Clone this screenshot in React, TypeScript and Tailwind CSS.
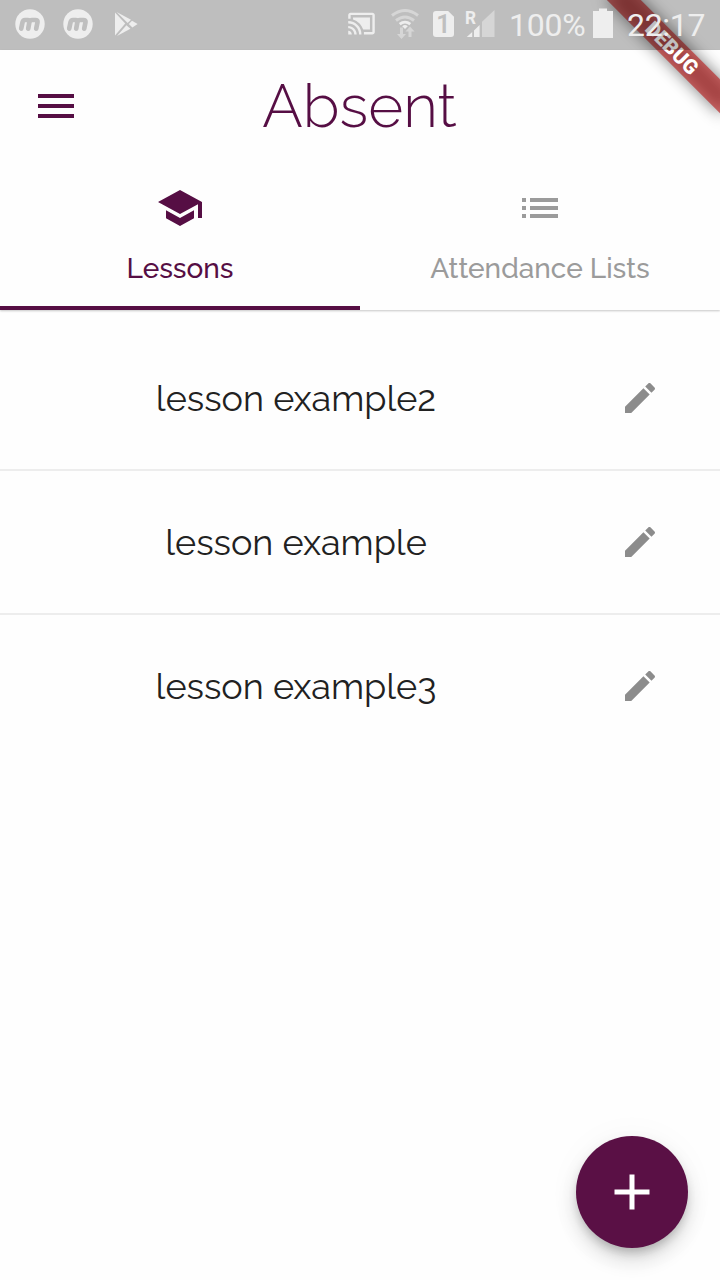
import React from "react";

function Icon({ d, className }: { d: string; className: string }) {
  return (
    <svg viewBox="0 0 24 24" fill="currentColor" className={className}>
      <path d={d} />
    </svg>
  );
}

const MENU = "M3 18h18v-2H3v2zm0-5h18v-2H3v2zm0-7v2h18V6H3z";
const SCHOOL = "M5 13.18v4L12 21l7-3.82v-4L12 17l-7-3.82zM12 3L1 9l11 6 9-4.91V17h2V9L12 3z";
const LIST = "M3 13h2v-2H3v2zm0 4h2v-2H3v2zm0-8h2V7H3v2zm4 4h14v-2H7v2zm0 4h14v-2H7v2zM7 7v2h14V7H7z";
const EDIT =
  "M3 17.25V21h3.75L17.81 9.94l-3.75-3.75L3 17.25zM20.71 7.04c.39-.39.39-1.02 0-1.41l-2.34-2.34c-.39-.39-1.02-.39-1.41 0l-1.83 1.83 3.75 3.75 1.83-1.83z";
const ADD = "M19 13h-6v6h-2v-6H5v-2h6V5h2v6h6v2z";
const CAST =
  "M21 3H3c-1.1 0-2 .9-2 2v3h2V5h18v14h-7v2h7c1.1 0 2-.9 2-2V5c0-1.1-.9-2-2-2zM1 18v3h3c0-1.66-1.34-3-3-3zm0-4v2c2.76 0 5 2.24 5 5h2c0-3.87-3.13-7-7-7zm0-4v2c4.97 0 9 4.03 9 9h2c0-6.08-4.93-11-11-11zM5 7v1.6c4 1.3 7.1 4.4 8.4 8.4H19V7z";

function MBadge() {
  return (
    <svg viewBox="0 0 30 30" className="h-[30px] w-[30px] shrink-0">
      <circle cx="15" cy="15" r="14.7" fill="#eeeeee" />
      <path
        d="M6.2 19.6L7.6 13Q8.1 11 10 11H12.7Q14.8 11 14.4 13L13.2 19.6M14.4 13Q15 11 17 11H20.4Q23 11 22.5 13.3L21.2 19.6"
        fill="none"
        stroke="#bfbfbf"
        strokeWidth="4.7"
        strokeLinecap="round"
        strokeLinejoin="round"
      />
    </svg>
  );
}

function StatusBar() {
  return (
    <div className="relative z-20 flex h-[50px] w-full items-start bg-black/25 font-['Roboto',sans-serif] text-[#eeeeee]">
      <div className="ml-[15px] mt-[9px] flex gap-[18px]">
        <MBadge />
        <MBadge />
      </div>
      <svg viewBox="0 0 24 26" className="ml-[21px] mt-[11px] h-[26px] w-6" fill="#eeeeee">
        <path d="M1 1.5L11.2 12.6 1 24.5z" />
        <path d="M2.6 1L17 8.8 13.7 12z" />
        <path d="M18 9.8L23.6 13 18.4 16.4 14.8 13z" />
        <path d="M12.4 14.2L16.4 17.8 3 25z" />
      </svg>
      <Icon d={CAST} className="ml-[209px] mt-[9px] h-[29px] w-[29px]" />
      <svg viewBox="0 0 28 30" className="ml-[15px] mt-[9px] h-[30px] w-7 shrink-0" fill="none">
        <path d="M1 6.5Q14 -3.5 27 6.5" stroke="#d6d6d6" strokeWidth="3" />
        <path d="M5 11.5Q14 4.5 23 11.5" stroke="#d6d6d6" strokeWidth="3" />
        <path d="M8.7 15.2Q14 11 19.3 15.2" stroke="#eeeeee" strokeWidth="2.8" />
        <path d="M11.2 17.2Q14 14.9 16.8 17.2L14 20z" fill="#eeeeee" />
        <path d="M9 18.5h3v6.5h3l-4.5 5L6 25h3zM17.5 28v-5.5h-3l4.5-5 4.5 5h-3V28z" fill="#d6d6d6" />
      </svg>
      <div className="ml-[14px] mt-[11px] h-[26px] w-[21px] rounded-[3px] bg-[#eeeeee] text-center font-['Roboto',sans-serif] text-[25px] font-semibold leading-[27px] text-[#bfbfbf] [clip-path:polygon(0_0,72%_0,100%_22%,100%_100%,0_100%)]">
        1
      </div>
      <svg viewBox="0 0 30 30" className="ml-[11px] mt-[9px] h-[30px] w-[30px] shrink-0 overflow-visible">
        <path d="M17 12.7L29.5 1v27H17z" fill="#d6d6d6" />
        <path d="M9 21.5L14.6 16v12H9zM7.2 23.1V28H1.8z" fill="#eeeeee" />
        <text x="0" y="15" fill="#eeeeee" fontFamily="Roboto, sans-serif" fontWeight="700" fontSize="18.5" textLength="11" lengthAdjust="spacingAndGlyphs">
          R
        </text>
      </svg>
      <span className="ml-[14px] mt-[6px] w-[78px] whitespace-nowrap text-[32px] leading-[38px] tracking-[-0.2px]">100%</span>
      <svg viewBox="0 0 20 30" className="ml-[6px] mt-[8px] h-[30px] w-5" fill="#eeeeee">
        <path d="M6 0.5h8V3h6v27H0V3h6z" />
      </svg>
      <span className="ml-[14px] mt-[6px] whitespace-nowrap text-[32px] leading-[38px] tracking-[-0.3px]">22:17</span>
    </div>
  );
}

function DebugBanner() {
  return (
    <div className="pointer-events-none absolute right-0 top-0 z-10 h-[170px] w-[170px] overflow-hidden">
      <div className="absolute left-[90px] top-[56px] h-6 w-40 origin-[80px_-56px] rotate-45">
        <div className="absolute inset-0 bg-black/50 blur-[8px]" />
        <div className="absolute inset-0 bg-[#b71c1c]/63 text-center font-['Roboto',sans-serif] text-[20.4px] font-black leading-6 text-white">
          DEBUG
        </div>
      </div>
    </div>
  );
}

function LessonRow({ name, last }: { name: string; last?: boolean }) {
  return (
    <li className={last ? "flex h-36 items-center" : "flex h-36 items-center shadow-[inset_0_-1px_#ededed,0_1px_#ededed]"}>
      <span className="ml-8 w-[528px] text-center text-[36px] leading-[44px] text-[#212121]">{name}</span>
      <Icon d={EDIT} className="ml-[60px] h-10 w-10 text-[#8c8c8c]" />
    </li>
  );
}

export default function App() {
  return (
    <div className="relative flex h-[1280px] w-[720px] flex-col overflow-hidden bg-[#fefefe] font-['Raleway','Lato',sans-serif]">
      <StatusBar />
      <DebugBanner />
      <header className="shadow-[0_1px_2px_rgba(0,0,0,0.22)]">
        <div className="grid h-28 grid-cols-[1fr_auto_1fr] items-center">
          <button className="ml-8 w-12">
            <Icon d={MENU} className="h-12 w-12 text-[#560e44]" />
          </button>
          <h1 className="-ml-px text-[60px] font-light leading-[72px] text-[#560e44]">Absent</h1>
        </div>
        <nav className="flex h-[148px] text-[28px] font-medium leading-8">
          <a className="flex flex-1 flex-col items-center border-b-4 border-[#560e44] pt-[22px] text-[#560e44]">
            <Icon d={SCHOOL} className="h-12 w-12" />
            <span className="mt-[21px]">Lessons</span>
          </a>
          <a className="flex flex-1 flex-col items-center pt-[22px] text-[#9b9b9b]">
            <Icon d={LIST} className="h-12 w-12" />
            <span className="mt-[21px]">Attendance Lists</span>
          </a>
        </nav>
      </header>
      <ul className="flex-1 pt-4">
        <LessonRow name="lesson example2" />
        <LessonRow name="lesson example" />
        <LessonRow name="lesson example3" last />
      </ul>
      <button className="absolute bottom-8 right-8 flex h-28 w-28 items-center justify-center rounded-full bg-[#5a1045] shadow-[0_6px_10px_-2px_rgba(0,0,0,0.2),0_12px_20px_rgba(0,0,0,0.14),0_2px_36px_rgba(0,0,0,0.04)]">
        <Icon d={ADD} className="h-[60px] w-[60px] text-white" />
      </button>
    </div>
  );
}
